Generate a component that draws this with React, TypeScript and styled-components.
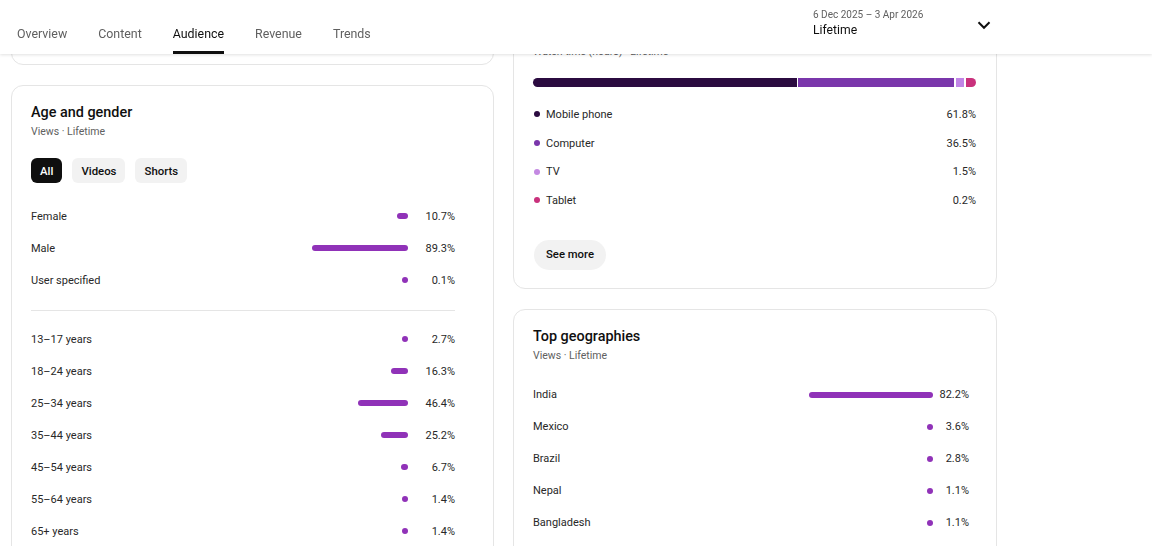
import styled, { createGlobalStyle } from "styled-components";
import { useLayoutEffect, useRef } from "react";

const GlobalStyle = createGlobalStyle`
  html, body { margin: 0; height: 100%; }
  body {
    font-family: Roboto, "Noto Sans", Arial, sans-serif;
    color: #0f0f0f;
    background: #fff;
  }
  * { box-sizing: border-box; }
`;

const Scroller = styled.div`
  height: 100vh;
  overflow-y: auto;
  background: #fff;

  &::-webkit-scrollbar { width: 9px; }
  &::-webkit-scrollbar-track { background: #fff; }
  &::-webkit-scrollbar-thumb {
    background: #c1c1c1;
    border-radius: 5px;
    border: 2px solid #fff;
  }
`;

const Header = styled.header`
  position: sticky;
  top: 0;
  z-index: 10;
  height: 54px;
  background: #fff;
  box-shadow: 0 1px 3px rgba(0, 0, 0, 0.12);
`;

const HeaderInner = styled.div`
  width: 997px;
  height: 100%;
  display: flex;
  align-items: stretch;
  padding-left: 17px;
`;

const Tabs = styled.nav`
  display: flex;
  gap: 31px;
`;

const Tab = styled.div<{ $active?: boolean }>`
  position: relative;
  padding-top: 25px;
  font-size: 12.4px;
  line-height: 17px;
  color: ${(p) => (p.$active ? "#0f0f0f" : "#606060")};

  &::after {
    content: "";
    display: ${(p) => (p.$active ? "block" : "none")};
    position: absolute;
    left: 0;
    right: 0;
    bottom: 0;
    height: 3px;
    background: #0f0f0f;
  }
`;

const DatePicker = styled.div`
  margin-left: auto;
  width: 184px;
  padding: 8px 2px 0 0;
  display: flex;
  justify-content: space-between;
`;

const DateText = styled.div`
  display: flex;
  flex-direction: column;
`;

const DateRange = styled.span`
  font-size: 10px;
  line-height: 13px;
  color: #606060;
`;

const DateLabel = styled.span`
  font-size: 12.2px;
  line-height: 18px;
  color: #0f0f0f;
`;

const Chevron = styled.svg`
  width: 22px;
  height: 22px;
  margin-top: 6px;
`;

const Content = styled.main`
  display: grid;
  grid-template-columns: 483px 484px;
  column-gap: 19px;
  align-items: start;
  padding: 20px 0 20px 11px;
`;

const Column = styled.div`
  display: flex;
  flex-direction: column;
  gap: 20px;
`;

const Card = styled.section<{ $h?: number }>`
  border: 1px solid #e5e5e5;
  border-radius: 12px;
  background: #fff;
  padding: 18px 20px 18px 19px;
  height: ${(p) => (p.$h ? `${p.$h}px` : "auto")};
`;

const CardTitle = styled.h2`
  margin: 0;
  font-size: 14.4px;
  line-height: 17px;
  font-weight: 500;
`;

const CardSub = styled.div`
  margin-top: 3px;
  font-size: 10.5px;
  line-height: 16px;
  color: #606060;
`;

const Chips = styled.div`
  display: flex;
  gap: 10px;
  margin-top: 18px;
  margin-bottom: 17px;
`;

const Chip = styled.button<{ $active?: boolean }>`
  height: 25px;
  padding: 0 9px;
  border: none;
  border-radius: 6px;
  font-family: inherit;
  font-size: 11.4px;
  font-weight: 500;
  background: ${(p) => (p.$active ? "#0f0f0f" : "#f2f2f2")};
  color: ${(p) => (p.$active ? "#fff" : "#0f0f0f")};
`;

const MetricList = styled.div<{ $pr: number; $mt?: number }>`
  padding-right: ${(p) => p.$pr}px;
  margin-top: ${(p) => p.$mt ?? 0}px;
`;

const MetricRow = styled.div`
  height: 32px;
  display: flex;
  align-items: center;
  font-size: 11px;
  color: #282828;
`;

const RowLabel = styled.span`
  flex: 1;
`;

const Bar = styled.div`
  height: 6px;
  border-radius: 3px;
  background: #9032b8;
`;

const Pct = styled.span<{ $w: number }>`
  width: ${(p) => p.$w}px;
  text-align: right;
`;

const Divider = styled.hr`
  border: none;
  border-top: 1px solid #e5e5e5;
  margin: 14px 18px 12px 0;
`;

const StackBar = styled.div`
  display: flex;
  height: 9px;
  margin-top: 18px;
`;

const Segment = styled.div<{ $color: string; $grow?: number; $w?: number; $gap?: number }>`
  background: ${(p) => p.$color};
  flex: ${(p) => (p.$grow ? `${p.$grow} 1 0` : `0 0 ${p.$w}px`)};
  margin-left: ${(p) => p.$gap ?? 0}px;
  &:first-child { border-radius: 5px 0 0 5px; }
  &:last-child { border-radius: 0 5px 5px 0; }
`;

const Legend = styled.div`
  margin-top: 13px;
`;

const LegendRow = styled.div`
  height: 28.7px;
  display: flex;
  align-items: center;
  font-size: 11px;
  color: #282828;
`;

const Dot = styled.span<{ $color: string }>`
  width: 6px;
  height: 6px;
  border-radius: 50%;
  margin: 0 6px 0 1px;
  background: ${(p) => p.$color};
`;

const LegendPct = styled.span`
  margin-left: auto;
`;

const PillButton = styled.button`
  margin-top: 25px;
  margin-left: 1px;
  height: 30px;
  padding: 0 12px;
  border: none;
  border-radius: 15px;
  background: #f2f2f2;
  font-family: inherit;
  font-size: 11.3px;
  font-weight: 500;
  color: #0f0f0f;
`;

type Metric = { label: string; pct: number };

const gender: Metric[] = [
  { label: "Female", pct: 10.7 },
  { label: "Male", pct: 89.3 },
  { label: "User specified", pct: 0.1 },
];

const ages: Metric[] = [
  { label: "13–17 years", pct: 2.7 },
  { label: "18–24 years", pct: 16.3 },
  { label: "25–34 years", pct: 46.4 },
  { label: "35–44 years", pct: 25.2 },
  { label: "45–54 years", pct: 6.7 },
  { label: "55–64 years", pct: 1.4 },
  { label: "65+ years", pct: 1.4 },
];

const devices = [
  { label: "Mobile phone", pct: "61.8%", color: "#2b0b40" },
  { label: "Computer", pct: "36.5%", color: "#7a36ab" },
  { label: "TV", pct: "1.5%", color: "#c489e2" },
  { label: "Tablet", pct: "0.2%", color: "#c9317c" },
];

const geos: Metric[] = [
  { label: "India", pct: 82.2 },
  { label: "Mexico", pct: 3.6 },
  { label: "Brazil", pct: 2.8 },
  { label: "Nepal", pct: 1.1 },
  { label: "Bangladesh", pct: 1.1 },
];

const Rows = ({ items, scale, pctW }: { items: Metric[]; scale: number; pctW: number }) => (
  <>
    {items.map((m) => (
      <MetricRow key={m.label}>
        <RowLabel>{m.label}</RowLabel>
        <Bar style={{ width: Math.max(6, m.pct * scale) }} />
        <Pct $w={pctW}>{m.pct.toFixed(1)}%</Pct>
      </MetricRow>
    ))}
  </>
);

const App = () => {
  const ref = useRef<HTMLDivElement>(null);

  useLayoutEffect(() => {
    if (ref.current) ref.current.scrollTop = 1284;
  }, []);

  return (
    <>
      <GlobalStyle />
      <Scroller ref={ref}>
        <Header>
          <HeaderInner>
            <Tabs>
              <Tab>Overview</Tab>
              <Tab>Content</Tab>
              <Tab $active>Audience</Tab>
              <Tab>Revenue</Tab>
              <Tab>Trends</Tab>
            </Tabs>
            <DatePicker>
              <DateText>
                <DateRange>6 Dec 2025 – 3 Apr 2026</DateRange>
                <DateLabel>Lifetime</DateLabel>
              </DateText>
              <Chevron viewBox="0 0 24 24" fill="none" stroke="#0f0f0f" strokeWidth="2.2">
                <polyline points="6 9 12 15 18 9" />
              </Chevron>
            </DatePicker>
          </HeaderInner>
        </Header>

        <Content>
          <Column>
            <Card $h={628}>
              <CardTitle>Returning viewers</CardTitle>
              <CardSub>Views · Lifetime</CardSub>
            </Card>
            <Card $h={627}>
              <CardTitle>When your viewers are on YouTube</CardTitle>
              <CardSub>Your local time (GMT +0530)</CardSub>
            </Card>
            <Card>
              <CardTitle>Age and gender</CardTitle>
              <CardSub>Views · Lifetime</CardSub>
              <Chips>
                <Chip $active>All</Chip>
                <Chip>Videos</Chip>
                <Chip>Shorts</Chip>
              </Chips>
              <MetricList $pr={18}>
                <Rows items={gender} scale={1.07} pctW={47} />
              </MetricList>
              <Divider />
              <MetricList $pr={18}>
                <Rows items={ages} scale={1.07} pctW={47} />
              </MetricList>
            </Card>
            <Card $h={353}>
              <CardTitle>Top subtitle/CC languages</CardTitle>
              <CardSub>Views · Lifetime</CardSub>
            </Card>
          </Column>

          <Column>
            <Card $h={588}>
              <CardTitle>Unique viewers</CardTitle>
              <CardSub>Lifetime</CardSub>
            </Card>
            <Card $h={587}>
              <CardTitle>Subscriber watch time</CardTitle>
              <CardSub>Watch time (hours) · Lifetime</CardSub>
            </Card>
            <Card>
              <CardTitle>Device type</CardTitle>
              <CardSub>Watch time (hours) · Lifetime</CardSub>
              <StackBar>
                <Segment $color="#2b0b40" $grow={61.8} />
                <Segment $color="#7a36ab" $grow={36.5} $gap={1} />
                <Segment $color="#c185e6" $w={8} $gap={2} />
                <Segment $color="#c9317c" $w={10} $gap={2} />
              </StackBar>
              <Legend>
                {devices.map((d) => (
                  <LegendRow key={d.label}>
                    <Dot $color={d.color} />
                    {d.label}
                    <LegendPct>{d.pct}</LegendPct>
                  </LegendRow>
                ))}
              </Legend>
              <PillButton>See more</PillButton>
            </Card>
            <Card>
              <CardTitle>Top geographies</CardTitle>
              <CardSub>Views · Lifetime</CardSub>
              <MetricList $pr={7} $mt={15}>
                <Rows items={geos} scale={1.51} pctW={36} />
              </MetricList>
              <PillButton>See more</PillButton>
            </Card>
          </Column>
        </Content>
      </Scroller>
    </>
  );
};

export default App;
